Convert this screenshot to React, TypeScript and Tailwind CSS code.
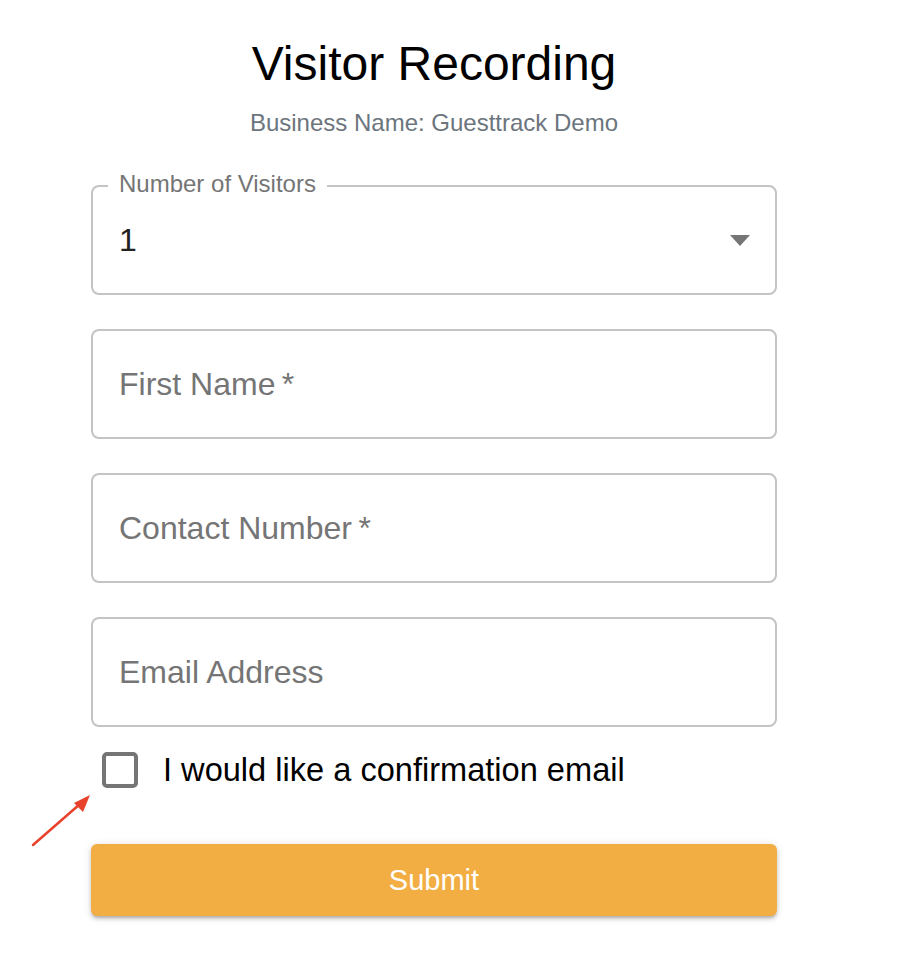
import React from "react";

const font = { fontFamily: '"Liberation Sans", Arial, Helvetica, sans-serif' };

function Field({ label }: { label: string }) {
  return (
    <div className="h-[110px] rounded-lg border-2 border-[#c4c4c4] flex items-center px-[26px]">
      <span className="text-[32px] leading-[32px] text-[#757575]">{label}</span>
    </div>
  );
}

export default function App() {
  return (
    <div className="relative w-[900px] h-[976px] bg-white" style={font}>
      <div className="ml-[91px] w-[686px] flex flex-col">
        <h1 className="mt-[40px] text-[48px] leading-[48px] text-center text-black font-normal">
          Visitor Recording
        </h1>
        <p className="mt-[23px] text-[24px] leading-[24px] text-center text-[#6c757d]">
          Business Name: Guesttrack Demo
        </p>

        <div className="relative mt-[50px] h-[110px] rounded-lg border-2 border-[#c4c4c4] flex items-center pl-[26px] pr-[25px]">
          <span className="absolute left-[15px] top-[-15px] px-[11px] bg-white text-[24px] leading-[24px] text-[#757575]">
            Number of Visitors
          </span>
          <span className="flex-1 text-[32px] leading-[32px] text-[#212121]">1</span>
          <svg width="20" height="11" viewBox="0 0 20 11">
            <polygon points="0,0 20,0 10,11" fill="#757575" />
          </svg>
        </div>

        <div className="mt-[34px] flex flex-col gap-[34px]">
          <Field label={"First Name\u2009*"} />
          <Field label={"Contact Number\u2009*"} />
          <Field label="Email Address" />
        </div>

        <div className="mt-[25px] flex items-center ml-[11px]">
          <div className="w-[36px] h-[36px] rounded-[5px] border-[4px] border-[#757575] bg-white" />
          <span className="ml-[25px] text-[32.6px] leading-[36px] text-black">
            I would like a confirmation email
          </span>
        </div>

        <button className="mt-[56px] h-[72px] rounded-[6px] bg-[#f2ae42] text-white text-[29px] leading-[29px] shadow-[0_3px_3px_-2px_rgba(0,0,0,0.2),0_3px_4px_0_rgba(0,0,0,0.14),0_1px_8px_0_rgba(0,0,0,0.12)]">
          Submit
        </button>
      </div>

      <svg className="absolute left-0 top-0" width="900" height="976" style={{ pointerEvents: "none" }}>
        <line x1="33" y1="845" x2="80" y2="804" stroke="#e8412c" strokeWidth="2.5" strokeLinecap="round" />
        <polygon points="90,795 74,803 83,812" fill="#e8412c" />
      </svg>
    </div>
  );
}
